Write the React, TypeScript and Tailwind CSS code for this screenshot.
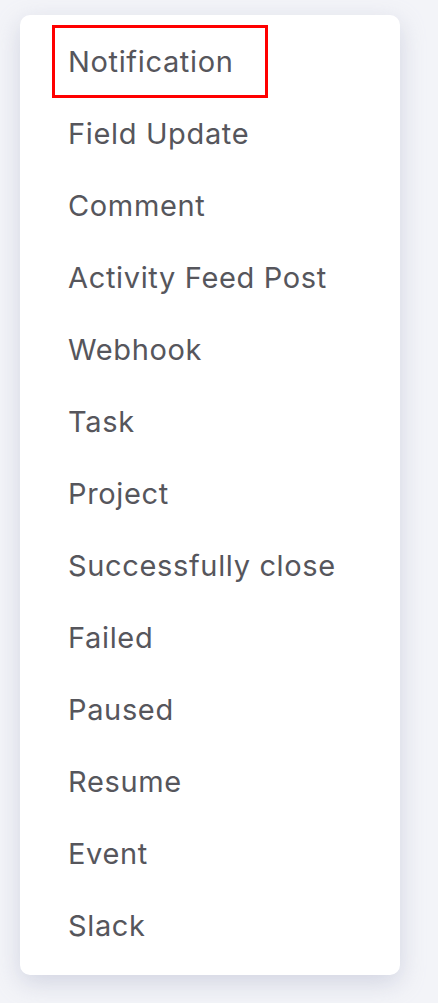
import React from "react";

const items = [
  "Notification",
  "Field Update",
  "Comment",
  "Activity Feed Post",
  "Webhook",
  "Task",
  "Project",
  "Successfully close",
  "Failed",
  "Paused",
  "Resume",
  "Event",
  "Slack",
];

export default function App() {
  return (
    <div
      className="w-[438px] h-[1003px] bg-[#f3f4f8] pt-[15px] pl-[20px] overflow-hidden"
      style={{ fontFamily: "Inter, 'Noto Sans', sans-serif" }}
    >
      <div className="w-[380px] bg-white rounded-[10px] shadow-[0_8px_24px_rgba(170,175,200,0.45)] pt-[10px] pb-[13px]">
        {items.map((t, i) =>
          i === 0 ? (
            <div
              key={t}
              className="ml-[32px] w-[216px] h-[73px] border-[3px] border-[#ff0000] flex items-center pl-[13px] text-[29px] tracking-[0.65px] text-[#56565c]"
            >
              {t}
            </div>
          ) : (
            <div
              key={t}
              className="h-[72px] flex items-center pl-[48px] text-[29px] tracking-[0.65px] text-[#56565c]"
            >
              {t}
            </div>
          )
        )}
      </div>
    </div>
  );
}
